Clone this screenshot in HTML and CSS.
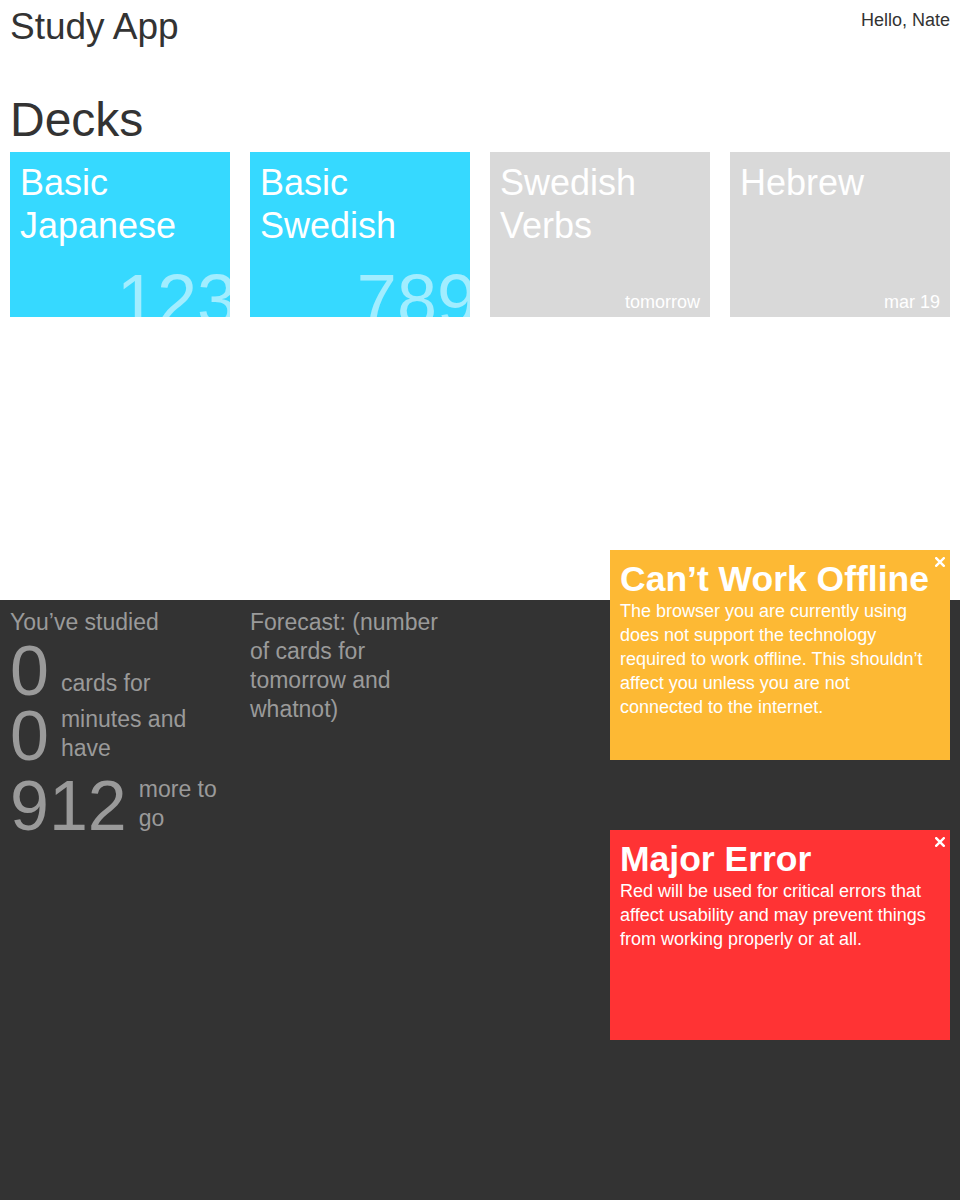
FILE: index.html
```html
<!DOCTYPE html>
<html lang="en">
<head>
<meta charset="utf-8">
<title>Study App</title>
<link rel="stylesheet" href="styles.css">
</head>
<body>
<div class="top">
  <header class="header">
    <h1 class="app-title">Study App</h1>
    <div class="greeting">Hello, Nate</div>
  </header>
  <h2 class="section-title">Decks</h2>
  <div class="decks">
    <div class="deck deck--due">
      <div class="deck-name">Basic Japanese</div>
      <div class="deck-count">123</div>
    </div>
    <div class="deck deck--due">
      <div class="deck-name">Basic Swedish</div>
      <div class="deck-count">789</div>
    </div>
    <div class="deck deck--later">
      <div class="deck-name">Swedish Verbs</div>
      <div class="deck-date">tomorrow</div>
    </div>
    <div class="deck deck--later">
      <div class="deck-name">Hebrew</div>
      <div class="deck-date">mar 19</div>
    </div>
  </div>
</div>

<section class="stats">
  <div class="stats-col">
    <div class="stats-intro">You’ve studied</div>
    <div class="stat-row stat-row--first">
      <span class="stat-num">0</span>
      <span class="stat-label">cards for</span>
    </div>
    <div class="stat-row">
      <span class="stat-num">0</span>
      <span class="stat-label">minutes and have</span>
    </div>
    <div class="stat-row stat-row--total">
      <span class="stat-num">912</span>
      <span class="stat-label">more to go</span>
    </div>
  </div>
  <div class="stats-col">
    <div class="forecast">Forecast: (number of cards for tomorrow and whatnot)</div>
  </div>
</section>

<div class="notices">
  <div class="notice notice--warning">
    <button class="notice-close" aria-label="Close">
      <svg width="10" height="10" viewBox="0 0 10 10"><path d="M1.2 1.2 L8.8 8.8 M8.8 1.2 L1.2 8.8" stroke="#fff" stroke-width="2.4" stroke-linecap="square"/></svg>
    </button>
    <div class="notice-title">Can’t Work Offline</div>
    <p class="notice-body">The browser you are currently using does not support the technology required to work offline. This shouldn’t affect you unless you are not connected to the internet.</p>
  </div>
  <div class="notice notice--error">
    <button class="notice-close" aria-label="Close">
      <svg width="10" height="10" viewBox="0 0 10 10"><path d="M1.2 1.2 L8.8 8.8 M8.8 1.2 L1.2 8.8" stroke="#fff" stroke-width="2.4" stroke-linecap="square"/></svg>
    </button>
    <div class="notice-title">Major Error</div>
    <p class="notice-body">Red will be used for critical errors that affect usability and may prevent things from working properly or at all.</p>
  </div>
</div>
</body>
</html>
```

FILE: styles.css
```css
html, body {
  margin: 0;
  padding: 0;
}

body {
  font-family: "Liberation Sans", Arial, Helvetica, sans-serif;
  color: #333333;
  background: #333333;
}

.top {
  height: 600px;
  box-sizing: border-box;
  padding: 0 10px;
  background: #ffffff;
}

.header {
  display: flex;
  justify-content: space-between;
  align-items: flex-start;
  padding-top: 7px;
}

.app-title {
  margin: 0;
  font-size: 37px;
  font-weight: normal;
  line-height: 40px;
}

.greeting {
  font-size: 18px;
  line-height: 20px;
  margin-top: 3px;
}

.section-title {
  margin: 48px 0 0;
  font-size: 48px;
  font-weight: normal;
  line-height: 50px;
}

.decks {
  display: grid;
  grid-template-columns: repeat(4, 220px);
  column-gap: 20px;
  margin-top: 7px;
}

.deck {
  position: relative;
  overflow: hidden;
  height: 165px;
  box-sizing: border-box;
  padding: 9px 10px 6px;
  display: flex;
  flex-direction: column;
  color: #ffffff;
}

.deck--due {
  background: #36d9ff;
}

.deck--later {
  background: #d9d9d9;
}

.deck-name {
  font-size: 36px;
  line-height: 43px;
}

.deck-count {
  position: absolute;
  right: -7px;
  bottom: -19px;
  font-size: 72px;
  line-height: 72px;
  color: #a2edff;
}

.deck-date {
  margin-top: auto;
  align-self: flex-end;
  font-size: 18px;
  line-height: 18px;
}

.stats {
  min-height: 600px;
  box-sizing: border-box;
  padding: 8px 10px 0;
  display: grid;
  grid-template-columns: 220px 205px;
  column-gap: 20px;
  align-content: start;
  align-items: start;
  color: #9a9a9a;
  font-size: 23px;
  line-height: 29px;
}

.stat-row {
  display: flex;
  align-items: flex-end;
  gap: 12px;
}

.stat-row--first {
  margin-top: 2px;
}

.stat-row--total {
  margin-top: 5px;
}

.stat-num {
  font-size: 70px;
  line-height: 65px;
  flex: none;
}

.stat-label {
  flex: 1;
  padding-bottom: 6px;
}

.notices {
  position: absolute;
  top: 550px;
  right: 10px;
  width: 340px;
  display: flex;
  flex-direction: column;
  gap: 70px;
}

.notice {
  position: relative;
  height: 210px;
  box-sizing: border-box;
  padding: 9px 10px;
  color: #ffffff;
}

.notice--warning {
  background: #fdb934;
}

.notice--error {
  background: #ff3334;
}

.notice-title {
  font-size: 35.5px;
  font-weight: bold;
  line-height: 40px;
}

.notice-body {
  margin: 0;
  max-width: 310px;
  font-size: 18px;
  line-height: 24px;
}

.notice-close {
  position: absolute;
  top: 7px;
  right: 5px;
  width: 10px;
  height: 10px;
  padding: 0;
  border: 0;
  background: none;
  display: flex;
  cursor: pointer;
}
```
